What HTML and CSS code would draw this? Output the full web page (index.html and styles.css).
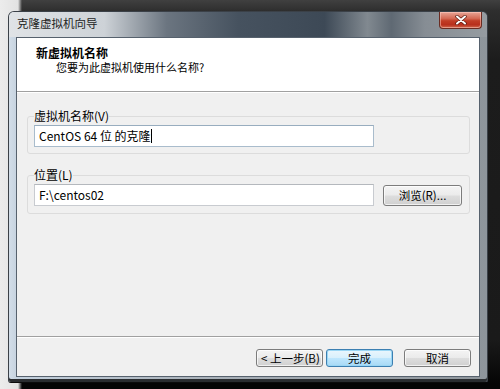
FILE: index.html
```html
<!DOCTYPE html>
<html lang="zh-CN">
<head>
  <meta charset="UTF-8">
  <meta name="viewport" content="width=device-width, initial-scale=1.0">
  <title>克隆虚拟机向导</title>
  <link rel="stylesheet" href="styles.css">
</head>
<body>
<div class="window">
  <div class="titlebar">
    <span class="title">克隆虚拟机向导</span>
    <button class="close-btn" aria-label="关闭">
      <svg width="12" height="10" viewBox="0 0 12 10">
        <path d="M2 1.5 L10 8.5 M10 1.5 L2 8.5" stroke="#5a1a10" stroke-width="3.4" stroke-linecap="round"/>
        <path d="M2 1.5 L10 8.5 M10 1.5 L2 8.5" stroke="#fff" stroke-width="2" stroke-linecap="round"/>
      </svg>
    </button>
  </div>

  <div class="client">
    <div class="header">
      <div class="header-title">新虚拟机名称</div>
      <div class="header-sub">您要为此虚拟机使用什么名称?</div>
    </div>

    <div class="content">
      <fieldset class="group">
        <legend>虚拟机名称(V)</legend>
        <div class="textbox focused">CentOS 64 位 的克隆<span class="caret"></span></div>
      </fieldset>

      <fieldset class="group group-location">
        <legend>位置(L)</legend>
        <div class="row">
          <div class="textbox">F:\centos02</div>
          <button class="btn browse-btn">浏览(R)...</button>
        </div>
      </fieldset>
    </div>

    <div class="footer">
      <button class="btn back-btn">&lt; 上一步(B)</button>
      <button class="btn default-btn">完成</button>
      <button class="btn cancel-btn">取消</button>
    </div>
  </div>
</div>
</body>
</html>
```

FILE: styles.css
```css
* {
  margin: 0;
  padding: 0;
  box-sizing: border-box;
  font-family: "Segoe UI", "Noto Sans CJK SC", sans-serif;
}

body {
  width: 500px;
  height: 389px;
  overflow: hidden;
  padding: 11px 0 0 8px;
  background:
    linear-gradient(to right, #ececec 0, #e2e2e2 18px, transparent 22px),
    linear-gradient(to bottom, #404040 0, #2e2e2e 11px, #1c1c1c 60px, #1a1a1a 340px, #050505 384px);
}

.window {
  width: 480px;
  height: 372px;
  display: flex;
  flex-direction: column;
  border: 1px solid #3b4148;
  border-bottom-color: #0c0c0c;
  border-radius: 6px 6px 3px 3px;
  background: linear-gradient(to right, #d2dde8 0, #c3d0dd 10px, #aab2ba 40%, #8e959b 100%);
  box-shadow: inset 0 -3px 0 #2a2d30;
}

.titlebar {
  height: 25px;
  display: flex;
  justify-content: space-between;
  align-items: flex-start;
  padding: 0 5px 0 8px;
  border-radius: 5px 5px 0 0;
  background: linear-gradient(to right, #e0e3e6 0%, #cdd2d7 20%, #6b7580 33%, #46525f 48%, #3d4956 66%, #818990 75%, #5f6973 80%, #868d94 87%, #969ca1 100%);
}

.title {
  font-size: 11.5px;
  line-height: 22px;
  color: #1e1e1e;
}

.close-btn {
  width: 43px;
  height: 17px;
  border: 1px solid #6a2c22;
  border-top: none;
  border-radius: 0 0 4px 4px;
  background: linear-gradient(to bottom, #e9a596 0%, #d46a55 40%, #c13d26 55%, #b82f1c 80%, #d06a4f 100%);
  box-shadow: inset 0 0 0 1px rgba(255, 210, 200, 0.5);
  display: flex;
  justify-content: center;
  align-items: center;
}

.client {
  flex: 1;
  margin: 0 7px 5px 7px;
  border: 1px solid #56616d;
  background-color: #f0f0f0;
  display: flex;
  flex-direction: column;
}

.header {
  height: 54px;
  background-color: #fff;
  border-bottom: 1px solid #a0a0a0;
  padding: 7px 0 0 19px;
  color: #000;
}

.header-title {
  font-size: 12px;
  font-weight: 700;
  line-height: 15px;
}

.header-sub {
  font-size: 11px;
  line-height: 14px;
  padding-left: 20px;
}

.content {
  height: 245px;
  border-bottom: 1px solid #a0a0a0;
  padding: 17px 9px 0 10px;
  box-shadow: inset 0 1px 0 #fff;
}

.group {
  border: 1px solid #dcdcdc;
  border-radius: 3px;
  padding: 2px 6px 6px 6px;
}

.group legend {
  font-size: 12px;
  line-height: 14px;
  color: #000;
  padding: 0;
}

.group-location {
  margin-top: 14px;
  padding-bottom: 7px;
}

.row {
  display: flex;
  align-items: center;
  gap: 9px;
}

.textbox {
  width: 340px;
  height: 22px;
  background-color: #fff;
  border: 1px solid #c8cbd0;
  border-top-color: #b4b8bd;
  padding: 0 4px;
  font-size: 12px;
  line-height: 20px;
  color: #000;
  display: flex;
  align-items: center;
}

.textbox.focused {
  border-color: #a9bccc;
  border-top-color: #98adbf;
}

.caret {
  display: inline-block;
  width: 1px;
  height: 14px;
  background-color: #000;
}

.btn {
  height: 18px;
  border: 1px solid #7c7c7c;
  border-radius: 3px;
  background: linear-gradient(to bottom, #f4f4f4 0%, #ebebeb 48%, #dddddd 52%, #d0d0d0 100%);
  box-shadow: inset 0 0 0 1px rgba(255, 255, 255, 0.7);
  font-size: 11.5px;
  line-height: 16px;
  color: #000;
  text-align: center;
}

.browse-btn {
  width: 79px;
  height: 21px;
  line-height: 19px;
}

.footer {
  flex: 1;
  display: flex;
  justify-content: flex-end;
  align-items: flex-start;
  padding: 12px 8px 0 0;
  box-shadow: inset 0 1px 0 #fff;
}

.footer .btn {
  width: 67px;
}

.back-btn {
  text-align: left;
  padding-left: 4px;
}

.default-btn {
  margin-left: 3px;
  border-color: #3c7fb1;
  background: linear-gradient(to bottom, #eaf6fd 0%, #d9f0fc 48%, #bee6fd 52%, #a7d9f5 100%);
  box-shadow: inset 0 0 0 1px #9ad6f4;
}

.cancel-btn {
  margin-left: 11px;
}
```
